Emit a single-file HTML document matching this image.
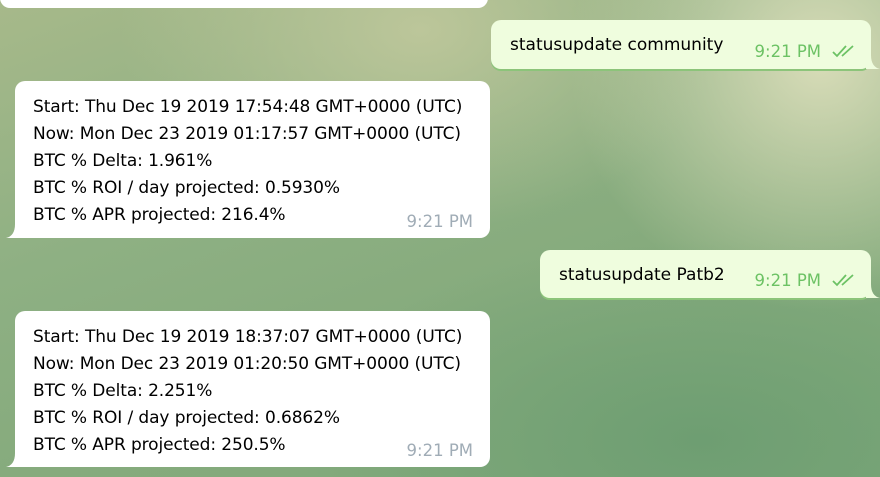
<html><head><style>
body{margin:0;width:880px;height:477px;overflow:hidden;font-family:"DejaVu Sans",sans-serif;
background:radial-gradient(ellipse 300px 200px at 420px 30px,#bcc69a,transparent),radial-gradient(ellipse 250px 250px at 820px 60px,#d8dcb8,transparent),radial-gradient(ellipse 400px 200px at 700px 440px,#6e9e72,transparent),linear-gradient(160deg,#a7b98a 0%,#8eb083 35%,#86ab7d 60%,#7ea97a 100%);position:relative}
.b{position:absolute;border-radius:10px;font-size:17px;color:#000}
.in{background:#fff;left:15px;width:475px}
.out{background:#effdde;box-shadow:0 2px 0 #8cc47a;right:9px}
.t{position:absolute;font-size:16.5px}
.in .t{color:#a0acb6;right:17px;bottom:7px}
.out .t{color:#6cc264;right:50px;bottom:8px}
.lines{padding:13px 0 0 18px;line-height:27px;letter-spacing:-0.1px}
.tl{position:absolute;left:-9px;bottom:0;width:14px;height:14px;background:#fff;clip-path:path('M0 14 Q9 12 9 0 L14 0 L14 14Z')}
.tr{position:absolute;right:-9px;bottom:0;width:14px;height:14px;background:#effdde;clip-path:path('M14 14 Q5 12 5 0 L0 0 L0 14Z')}
svg{position:absolute;right:14px;bottom:11px}
</style></head><body>
<div class="b in" style="top:-20px;left:0;width:488px;height:28px;border-radius:0 0 10px 10px"></div>
<div class="b out" style="top:20px;width:380px;height:49px"><span style="position:absolute;left:19px;top:15px">statusupdate community</span><span class="t">9:21 PM</span><svg width="26" height="14" viewBox="0 0 26 14"><path d="M2 8l4 4 9-10M11 12l11-10" stroke="#6cc264" stroke-width="1.8" fill="none"/></svg><div class="tr"></div></div>
<div class="b in" style="top:81px;height:157px;border-bottom-left-radius:0"><div class="lines">Start: Thu Dec 19 2019 17:54:48 GMT+0000 (UTC)<br>Now: Mon Dec 23 2019 01:17:57 GMT+0000 (UTC)<br>BTC % Delta: 1.961%<br>BTC % ROI / day projected: 0.5930%<br>BTC % APR projected: 216.4%</div><span class="t">9:21 PM</span><div class="tl"></div></div>
<div class="b out" style="top:250px;width:331px;height:48px"><span style="position:absolute;left:19px;top:15px">statusupdate Patb2</span><span class="t">9:21 PM</span><svg width="26" height="14" viewBox="0 0 26 14"><path d="M2 8l4 4 9-10M11 12l11-10" stroke="#6cc264" stroke-width="1.8" fill="none"/></svg><div class="tr"></div></div>
<div class="b in" style="top:311px;height:156px;border-bottom-left-radius:0"><div class="lines">Start: Thu Dec 19 2019 18:37:07 GMT+0000 (UTC)<br>Now: Mon Dec 23 2019 01:20:50 GMT+0000 (UTC)<br>BTC % Delta: 2.251%<br>BTC % ROI / day projected: 0.6862%<br>BTC % APR projected: 250.5%</div><span class="t">9:21 PM</span><div class="tl"></div></div>
</body></html>
